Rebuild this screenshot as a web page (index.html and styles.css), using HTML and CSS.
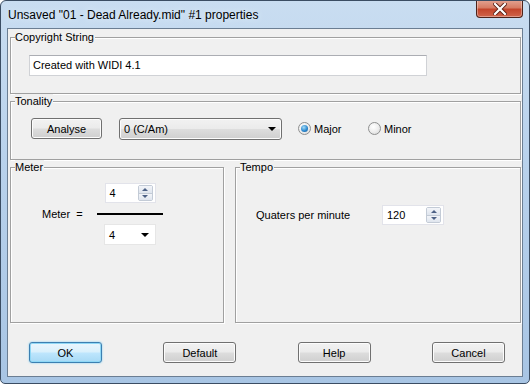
FILE: index.html
```html
<!DOCTYPE html>
<html lang="en">

<head>
    <meta charset="UTF-8">
    <title>Properties</title>
    <link rel="stylesheet" href="styles.css">
</head>

<body>
    <div class="window">
        <!-- Title bar -->
        <div class="titlebar">
            <span class="title">Unsaved "01 - Dead Already.mid" #1 properties</span>
            <span class="close">
                <svg width="14" height="12" viewBox="0 0 14 12">
                    <path d="M2 1 L12 11 M12 1 L2 11" stroke="#5a1f14" stroke-width="4" stroke-linecap="square" />
                    <path d="M2 1 L12 11 M12 1 L2 11" stroke="#fff" stroke-width="2.2" stroke-linecap="square" />
                </svg>
            </span>
        </div>

        <div class="client">
            <!-- Copyright -->
            <div class="group copyright">
                <div class="group-title">Copyright String</div>
                <div class="textbox">Created with WIDI 4.1</div>
            </div>

            <!-- Tonality -->
            <div class="group tonality">
                <div class="group-title">Tonality</div>
                <div class="tonality-row">
                    <button class="btn analyse">Analyse</button>
                    <div class="combo">
                        <span>0 (C/Am)</span>
                        <span class="arrow"></span>
                    </div>
                    <label class="radio major"><span class="dot checked"></span>Major</label>
                    <label class="radio"><span class="dot"></span>Minor</label>
                </div>
            </div>

            <div class="split">
                <!-- Meter -->
                <div class="group meter">
                    <div class="group-title">Meter</div>
                    <div class="meter-row">
                        <span class="meter-label">Meter&nbsp;&nbsp;=</span>
                        <div class="fraction">
                            <div class="spin small">
                                <span>4</span>
                                <span class="spin-btns"><i class="up"></i><i class="down"></i></span>
                            </div>
                            <div class="bar"></div>
                            <div class="list">
                                <span>4</span>
                                <span class="arrow"></span>
                            </div>
                        </div>
                    </div>
                </div>

                <!-- Tempo -->
                <div class="group tempo">
                    <div class="group-title">Tempo</div>
                    <div class="tempo-row">
                        <span class="tempo-label">Quaters per minute</span>
                        <div class="spin wide">
                            <span>120</span>
                            <span class="spin-btns"><i class="up"></i><i class="down"></i></span>
                        </div>
                    </div>
                </div>
            </div>

            <!-- Dialog buttons -->
            <div class="buttons">
                <button class="btn default-btn">OK</button>
                <button class="btn">Default</button>
                <button class="btn">Help</button>
                <button class="btn">Cancel</button>
            </div>
        </div>
    </div>
</body>

</html>
```

FILE: styles.css
```css
/* Windows 7 style dialog */
body {
    margin: 0;
    background-color: #fff;
    font-family: "Liberation Sans", Arial, sans-serif;
    font-size: 11px;
    color: #000;
}

.window {
    width: 530px;
    height: 384px;
    box-sizing: border-box;
    border: 1px solid #3b4d63;
    border-radius: 6px 6px 5px 5px;
    background: linear-gradient(to bottom, #c9ddf1 0%, #b9d2ec 40%, #a8c5e4 100%);
    overflow: hidden;
}

/* Title bar */
.titlebar {
    display: flex;
    height: 27px;
    padding-left: 7px;
    padding-right: 6px;
}

.title {
    font-size: 12px;
    line-height: 12px;
    margin-top: 8px;
    color: #000;
    text-shadow: 0 0 6px #e8f2fb;
}

.close {
    margin-left: auto;
    width: 47px;
    height: 18px;
    margin-top: -1px;
    box-sizing: border-box;
    border: 1px solid #4e231a;
    border-top: none;
    border-radius: 0 0 4px 4px;
    background: linear-gradient(to bottom, #e4a493 0%, #d77c64 45%, #c4452b 55%, #d0644a 100%);
    box-shadow: inset 0 0 0 1px rgba(255, 255, 255, 0.35);
    display: flex;
    align-items: center;
    justify-content: center;
}

/* Client area */
.client {
    margin-left: 6px;
    width: 516px;
    height: 349px;
    box-sizing: border-box;
    border: 1px solid #6b7e93;
    background-color: #f0f0f0;
    padding: 0 1px 0 2px;
}

/* Group boxes */
.group {
    box-sizing: border-box;
    border: 1px solid #a0a0a0;
    box-shadow: inset 1px 1px 0 #fff, 1px 1px 0 #fff;
}

.group-title {
    display: block;
    width: fit-content;
    margin: -8px 0 0 4px;
    padding: 0 1px 0 0;
    line-height: 14px;
    height: 14px;
    background-color: #f0f0f0;
}

.copyright {
    margin-top: 8px;
    height: 57px;
}

.textbox {
    margin: 11px 0 0 18px;
    width: 398px;
    height: 21px;
    box-sizing: border-box;
    border: 1px solid #d0d2d6;
    border-top-color: #abadb3;
    background-color: #fff;
    line-height: 19px;
    padding-left: 3px;
}

.tonality {
    margin-top: 7px;
    height: 59px;
}

.tonality-row {
    display: flex;
    align-items: center;
    margin-top: 9px;
    height: 23px;
}

/* Push buttons */
.btn {
    font-family: "Liberation Sans", Arial, sans-serif;
    font-size: 11px;
    color: #000;
    width: 73px;
    height: 21px;
    padding: 0;
    border: 1px solid #707070;
    border-radius: 3px;
    background: linear-gradient(to bottom, #f2f2f2 0%, #ebebeb 48%, #dddddd 52%, #cfcfcf 100%);
    box-shadow: inset 0 0 0 1px #fcfcfc;
}

.analyse {
    width: 71px;
    margin-left: 20px;
}

.default-btn {
    border-color: #3c7fb1;
    background: linear-gradient(to bottom, #eaf6fd 0%, #d9f0fc 48%, #bee6fd 52%, #a7d9f5 100%);
    box-shadow: inset 0 0 0 1px #8fd8f6, 0 0 2px #6ecbf3;
}

.combo {
    display: flex;
    align-items: center;
    margin-left: 17px;
    width: 163px;
    height: 22px;
    box-sizing: border-box;
    border: 1px solid #707070;
    border-radius: 3px;
    background: linear-gradient(to bottom, #f2f2f2 0%, #ebebeb 48%, #dddddd 52%, #cfcfcf 100%);
    box-shadow: inset 0 0 0 1px #fcfcfc;
    padding-left: 4px;
}

.arrow {
    margin-left: auto;
    margin-right: 5px;
    width: 0;
    height: 0;
    border-left: 4px solid transparent;
    border-right: 4px solid transparent;
    border-top: 4px solid #000;
}

/* Radio buttons */
.radio {
    display: flex;
    align-items: center;
    gap: 3px;
}

.major {
    margin-left: 16px;
    width: 69px;
}

.dot {
    width: 13px;
    height: 13px;
    box-sizing: border-box;
    border: 1px solid #8e8f8f;
    border-radius: 50%;
    background: radial-gradient(circle at 40% 35%, #ffffff 0%, #eeeeee 50%, #d4d4d4 100%);
    position: relative;
}

.dot.checked::after {
    content: "";
    position: absolute;
    left: 2px;
    top: 2px;
    width: 7px;
    height: 7px;
    border-radius: 50%;
    background: radial-gradient(circle at 40% 35%, #a6dcf6 0%, #2e8ad0 55%, #0f4f8c 100%);
}

.radio .dot:not(.checked) {
    margin-left: 1px;
}

/* Meter and tempo */
.split {
    display: flex;
    gap: 11px;
    margin-top: 7px;
    height: 156px;
}

.meter {
    width: 214px;
    height: 156px;
}

.tempo {
    flex: 1;
    height: 156px;
}

.meter-row {
    display: flex;
    align-items: center;
    margin-top: 9px;
}

.meter-label {
    margin-left: 31px;
    width: 55px;
}

.fraction {
    display: flex;
    flex-direction: column;
    align-items: center;
    width: 66px;
}

.spin {
    display: flex;
    align-items: center;
    height: 20px;
    box-sizing: border-box;
    border: 1px solid #e2e3ea;
    background-color: #fff;
    padding-left: 4px;
}

.spin.small {
    width: 51px;
}

.spin.wide {
    width: 62px;
}

.spin-btns {
    margin-left: auto;
    margin-right: 2px;
    display: flex;
    flex-direction: column;
    width: 15px;
    height: 16px;
    border: 1px solid #c3cbd6;
    border-radius: 2px;
    box-sizing: border-box;
}

.spin-btns i {
    flex: 1;
    display: flex;
    align-items: center;
    justify-content: center;
    background: linear-gradient(to bottom, #f3f5f9, #dfe5ee);
}

.spin-btns i.up {
    border-bottom: 1px solid #c3cbd6;
}

.spin-btns i.up::after {
    content: "";
    border-left: 3px solid transparent;
    border-right: 3px solid transparent;
    border-bottom: 3px solid #4d6185;
}

.spin-btns i.down::after {
    content: "";
    border-left: 3px solid transparent;
    border-right: 3px solid transparent;
    border-top: 3px solid #4d6185;
}

.bar {
    margin-top: 10px;
    width: 66px;
    height: 2px;
    background-color: #000;
}

.list {
    display: flex;
    align-items: center;
    margin-top: 9px;
    width: 52px;
    height: 21px;
    box-sizing: border-box;
    border: 1px solid #e6e6e6;
    background-color: #fff;
    padding-left: 4px;
}

.list .arrow {
    margin-right: 6px;
}

.tempo-row {
    display: flex;
    align-items: center;
    margin-top: 31px;
}

.tempo-label {
    margin-left: 20px;
    width: 126px;
}

/* Dialog buttons */
.buttons {
    display: flex;
    justify-content: space-between;
    margin-top: 19px;
    padding: 0 16px 0 19px;
}
```
